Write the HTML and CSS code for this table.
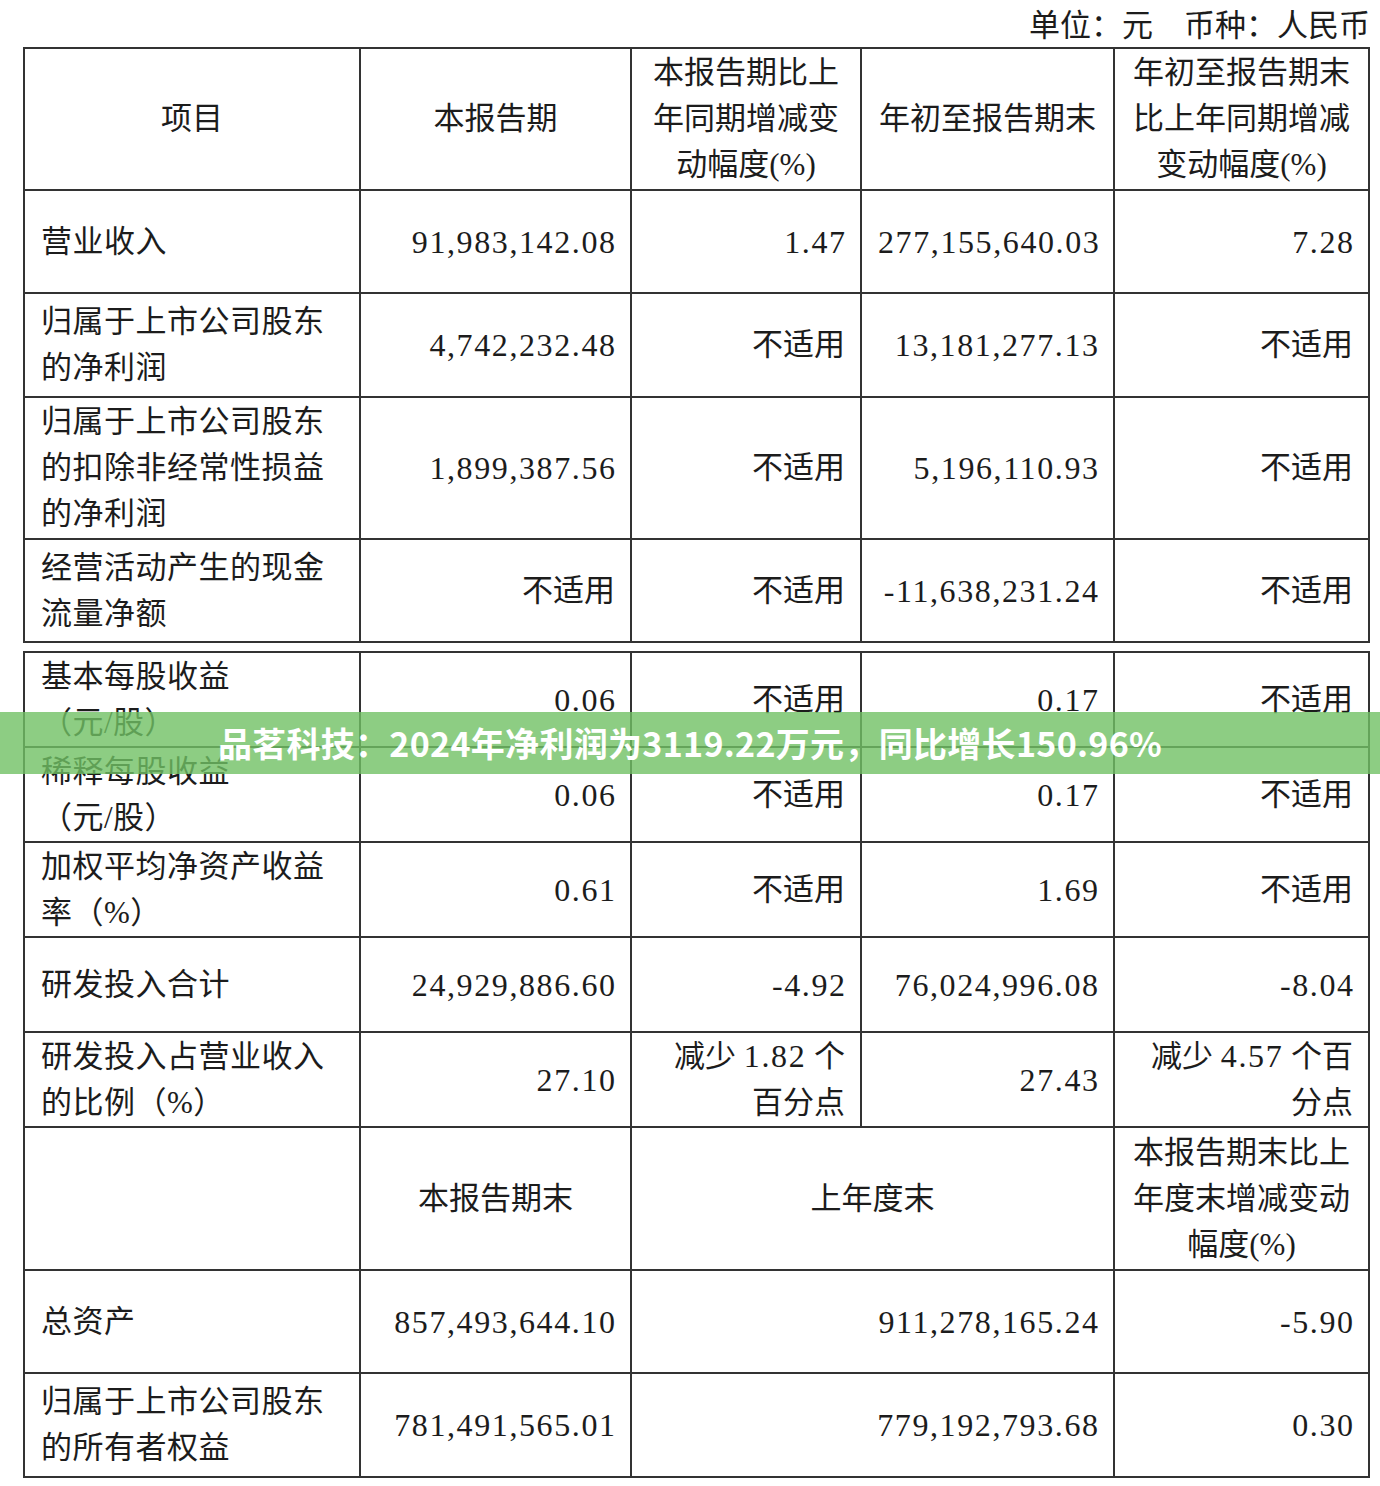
FILE: index.html
```html
<!DOCTYPE html>
<html lang="zh-CN">
<head>
<meta charset="utf-8">
<title>品茗科技 财务数据</title>
<link rel="stylesheet" href="styles.css">
</head>
<body>
<div class="page">
  <div class="unit">单位：元　币种：人民币</div>

  <div class="grid t1">
    <div class="c ctr">项目</div>
    <div class="c ctr">本报告期</div>
    <div class="c ctr">本报告期比上<br>年同期增减变<br>动幅度(%)</div>
    <div class="c ctr">年初至报告期末</div>
    <div class="c ctr">年初至报告期末<br>比上年同期增减<br>变动幅度(%)</div>

    <div class="c l">营业收入</div>
    <div class="c r"><span class="n">91,983,142.08</span></div>
    <div class="c r"><span class="n">1.47</span></div>
    <div class="c r"><span class="n">277,155,640.03</span></div>
    <div class="c r"><span class="n">7.28</span></div>

    <div class="c l">归属于上市公司股东<br>的净利润</div>
    <div class="c r"><span class="n">4,742,232.48</span></div>
    <div class="c r">不适用</div>
    <div class="c r"><span class="n">13,181,277.13</span></div>
    <div class="c r">不适用</div>

    <div class="c l">归属于上市公司股东<br>的扣除非经常性损益<br>的净利润</div>
    <div class="c r"><span class="n">1,899,387.56</span></div>
    <div class="c r">不适用</div>
    <div class="c r"><span class="n">5,196,110.93</span></div>
    <div class="c r">不适用</div>

    <div class="c l">经营活动产生的现金<br>流量净额</div>
    <div class="c r">不适用</div>
    <div class="c r">不适用</div>
    <div class="c r"><span class="n">-11,638,231.24</span></div>
    <div class="c r">不适用</div>
  </div>

  <div class="grid t2">
    <div class="c l">基本每股收益<br>（元/股）</div>
    <div class="c r"><span class="n">0.06</span></div>
    <div class="c r">不适用</div>
    <div class="c r"><span class="n">0.17</span></div>
    <div class="c r">不适用</div>

    <div class="c l">稀释每股收益<br>（元/股）</div>
    <div class="c r"><span class="n">0.06</span></div>
    <div class="c r">不适用</div>
    <div class="c r"><span class="n">0.17</span></div>
    <div class="c r">不适用</div>

    <div class="c l">加权平均净资产收益<br>率（%）</div>
    <div class="c r"><span class="n">0.61</span></div>
    <div class="c r">不适用</div>
    <div class="c r"><span class="n">1.69</span></div>
    <div class="c r">不适用</div>

    <div class="c l">研发投入合计</div>
    <div class="c r"><span class="n">24,929,886.60</span></div>
    <div class="c r"><span class="n">-4.92</span></div>
    <div class="c r"><span class="n">76,024,996.08</span></div>
    <div class="c r"><span class="n">-8.04</span></div>

    <div class="c l">研发投入占营业收入<br>的比例（%）</div>
    <div class="c r"><span class="n">27.10</span></div>
    <div class="c r"><div class="txt">减少 <span class="n mid">1.82</span> 个<br>百分点</div></div>
    <div class="c r"><span class="n">27.43</span></div>
    <div class="c r"><div class="txt">减少 <span class="n mid">4.57</span> 个百<br>分点</div></div>

    <div class="c l"></div>
    <div class="c ctr">本报告期末</div>
    <div class="c ctr span2">上年度末</div>
    <div class="c ctr">本报告期末比上<br>年度末增减变动<br>幅度(%)</div>

    <div class="c l">总资产</div>
    <div class="c r"><span class="n">857,493,644.10</span></div>
    <div class="c r span2"><span class="n">911,278,165.24</span></div>
    <div class="c r"><span class="n">-5.90</span></div>

    <div class="c l">归属于上市公司股东<br>的所有者权益</div>
    <div class="c r"><span class="n">781,491,565.01</span></div>
    <div class="c r span2"><span class="n">779,192,793.68</span></div>
    <div class="c r"><span class="n">0.30</span></div>
  </div>

  <div class="banner">品茗科技：2024年净利润为3119.22万元，同比增长150.96%</div>
</div>
</body>
</html>
```

FILE: styles.css
```css
html, body {
  margin: 0;
  padding: 0;
  background: #ffffff;
}

.page {
  position: relative;
  width: 1380px;
  height: 1486px;
  box-sizing: border-box;
  padding-left: 23px;
  font-family: "Liberation Serif", "Noto Sans CJK SC", serif;
  color: #1c1c1c;
  font-size: 31px;
  line-height: 46px;
}

.unit {
  height: 47px;
  line-height: 46px;
  width: 1347px;
  text-align: right;
  font-family: "Noto Sans CJK SC", sans-serif;
}

.grid {
  display: grid;
  width: 1347px;
  box-sizing: border-box;
  grid-template-columns: 336px 271px 230px 253px 255px;
  border-left: 2px solid #333333;
  border-top: 2px solid #333333;
}

.t1 {
  grid-template-rows: 142px 103px 104px 142px 103px;
}

.t2 {
  margin-top: 8px;
  grid-template-rows: 95px 95px 95px 95px 95px 143px 103px 104px;
}

.c {
  box-sizing: border-box;
  border-right: 2px solid #333333;
  border-bottom: 2px solid #333333;
  display: flex;
  flex-direction: column;
  justify-content: center;
  padding: 0 15px 0 16px;
  white-space: nowrap;
}

.l { text-align: left; letter-spacing: 0.5px; }
.r { text-align: right; }
.ctr { text-align: center; padding: 0 4px; }

.span2 { grid-column: span 2; }

.txt { display: block; }

.n {
  font-size: 32px;
  letter-spacing: 1.6px;
  margin-right: -1.6px;
}

.n.mid {
  margin-right: 0;
}

.banner {
  position: absolute;
  left: 0;
  top: 712px;
  width: 1380px;
  height: 62px;
  background: rgba(112, 192, 100, 0.8);
  color: #ffffff;
  font-family: "Noto Sans CJK SC", sans-serif;
  font-weight: 700;
  font-size: 34px;
  letter-spacing: 0.3px;
  line-height: 62px;
  text-align: center;
  white-space: nowrap;
}
```
